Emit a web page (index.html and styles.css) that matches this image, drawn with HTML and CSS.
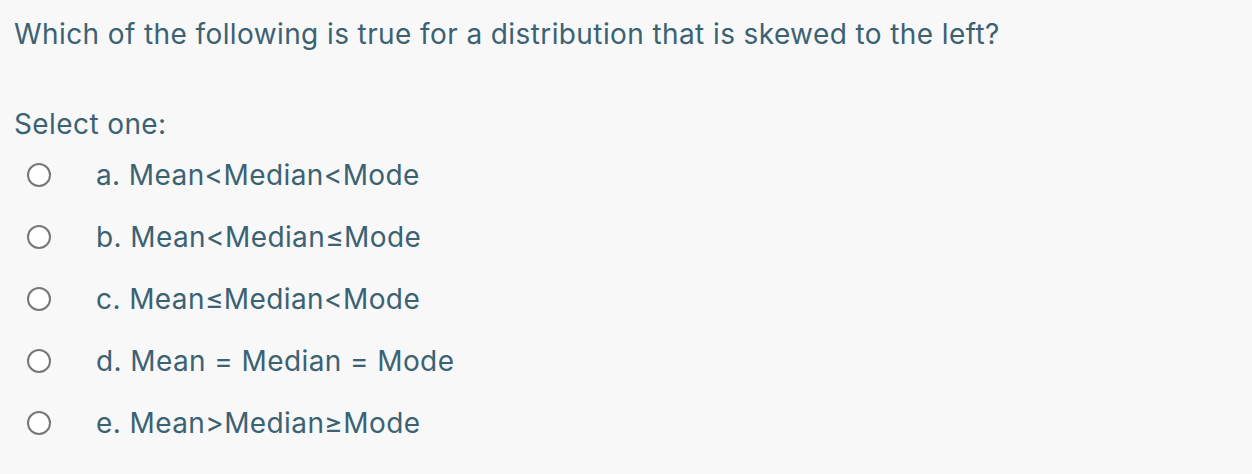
FILE: index.html
```html
<!DOCTYPE html>
<html>
<head>
<meta charset="utf-8">
<link rel="stylesheet" href="styles.css">
</head>
<body>
<div class="question">
  <div class="qtext">Which of the following is true for a distribution that is skewed to the left?</div>
  <div class="prompt">Select one:</div>
  <div class="answers">
    <label class="answer"><span class="radio"></span><span class="label">a. Mean&lt;Median&lt;Mode</span></label>
    <label class="answer"><span class="radio"></span><span class="label">b. Mean&lt;Median≤Mode</span></label>
    <label class="answer"><span class="radio"></span><span class="label">c. Mean≤Median&lt;Mode</span></label>
    <label class="answer"><span class="radio"></span><span class="label">d. Mean = Median = Mode</span></label>
    <label class="answer"><span class="radio"></span><span class="label">e. Mean&gt;Median≥Mode</span></label>
  </div>
</div>
</body>
</html>
```

FILE: styles.css
```css
html, body {
  margin: 0;
  padding: 0;
  background: #f8f8f8;
}
body {
  font-family: Inter, "Noto Sans", sans-serif;
  color: #3b6273;
  font-size: 28px;
  letter-spacing: 0.4px;
}
.question {
  padding: 14px 14px 0 14px;
}
.qtext {
  line-height: 40px;
  height: 40px;
}
.prompt {
  margin-top: 50px;
  line-height: 40px;
}
.answers {
  display: flex;
  flex-direction: column;
}
.answer {
  display: flex;
  align-items: center;
  height: 62px;
}
.radio {
  flex: none;
  width: 24px;
  height: 24px;
  border: 2px solid #777;
  border-radius: 50%;
  background: #fff;
  margin-left: 13px;
  margin-right: 45px;
  box-sizing: border-box;
}
```
